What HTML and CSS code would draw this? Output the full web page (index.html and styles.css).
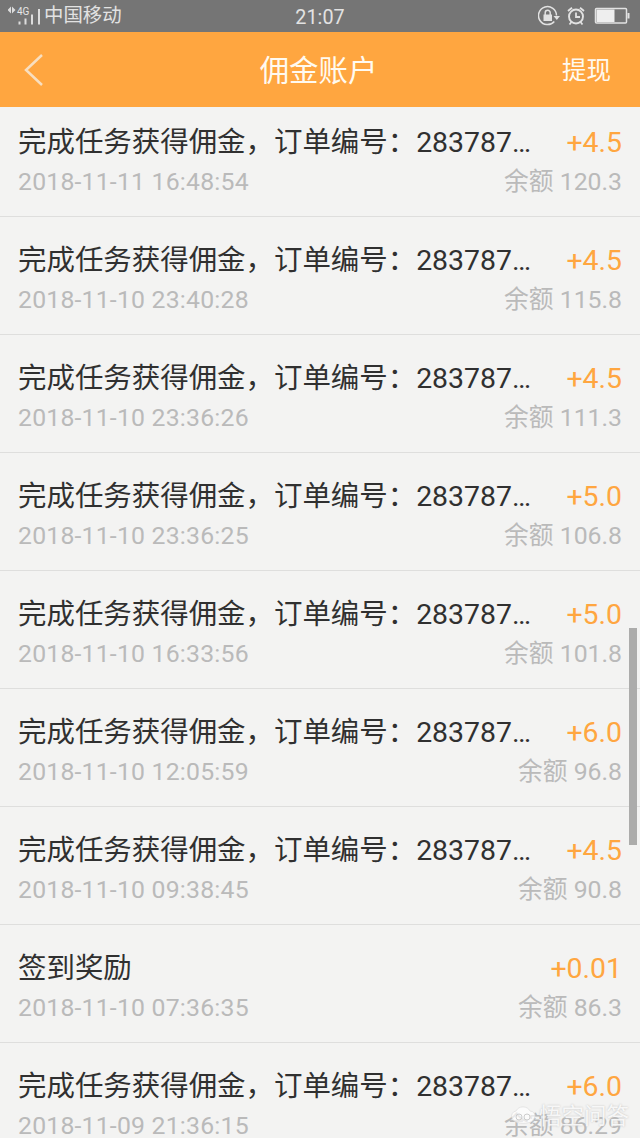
FILE: index.html
```html
<!DOCTYPE html>
<html lang="zh-CN">
<head>
<meta charset="utf-8">
<title>佣金账户</title>
<link rel="stylesheet" href="styles.css">
</head>
<body>
<div id="statusBar">
  <div class="carrier">
    <svg width="34" height="20" viewBox="0 0 34 20">
      <path d="M-.500 4L3 .500v7zM7.500 4L4 .500v7z" fill="#ddd"/>
      <text x="9" y="9" class="network">4G</text>
      <path d="M11.500 15.500v3M17.500 12.500v6M24 8.500v10M31 3v15.500" stroke="#ddd" stroke-width="2"/>
    </svg>
    <span>中国移动</span>
  </div>
  <div class="clock">21:07</div>
  <svg class="statusIcons" width="94" height="24" viewBox="0 0 94 24" fill="none" stroke="#e2e2e2">
    <path d="M16.300 17.500A9 9 0 1 1 18.500 11.500" stroke-width="1.500"/>
    <path d="M15.500 12h6.500l-3.200 4z" fill="#e2e2e2" stroke="none"/>
    <rect x="5.500" y="10.500" width="8.500" height="6.500" fill="#e2e2e2" stroke="none"/>
    <path d="M7.200 11V8.800a2.500 2.500 0 0 1 5 0V11" stroke-width="1.500"/>
    <circle cx="38" cy="12.500" r="7" stroke-width="1.900"/>
    <path d="M38 8.500v4.500h4M30 7l4-3.300M46 7l-4-3.300M33.500 18l-2 2.500M42.500 18l2 2.500" stroke-width="1.800"/>
    <rect x="57.500" y="4.500" width="31" height="14.500" rx="1" stroke-width="1.500"/>
    <path d="M58.500 5.500h18V18h-18z" fill="#eee" stroke="none"/>
    <path d="M90.500 9v5.500" stroke-width="2"/>
  </svg>
</div>
<div id="header">
  <svg class="back" width="20" height="32" viewBox="0 0 20 32">
    <path d="M18 1L2 16l16 15" fill="none" stroke="#f8dfc0" stroke-width="2.500"/>
  </svg>
  <div class="title">佣金账户</div>
  <div class="withdraw">提现</div>
</div>
<div id="records">
  <div class="record">
    <div class="line"><span class="desc">完成任务获得佣金，订单编号：283787…</span><span class="amount">+4.5</span></div>
    <div class="line small"><span class="time">2018-11-11 16:48:54</span><span>余额 120.3</span></div>
  </div>
  <div class="record">
    <div class="line"><span class="desc">完成任务获得佣金，订单编号：283787…</span><span class="amount">+4.5</span></div>
    <div class="line small"><span class="time">2018-11-10 23:40:28</span><span>余额 115.8</span></div>
  </div>
  <div class="record">
    <div class="line"><span class="desc">完成任务获得佣金，订单编号：283787…</span><span class="amount">+4.5</span></div>
    <div class="line small"><span class="time">2018-11-10 23:36:26</span><span>余额 111.3</span></div>
  </div>
  <div class="record">
    <div class="line"><span class="desc">完成任务获得佣金，订单编号：283787…</span><span class="amount">+5.0</span></div>
    <div class="line small"><span class="time">2018-11-10 23:36:25</span><span>余额 106.8</span></div>
  </div>
  <div class="record">
    <div class="line"><span class="desc">完成任务获得佣金，订单编号：283787…</span><span class="amount">+5.0</span></div>
    <div class="line small"><span class="time">2018-11-10 16:33:56</span><span>余额 101.8</span></div>
  </div>
  <div class="record">
    <div class="line"><span class="desc">完成任务获得佣金，订单编号：283787…</span><span class="amount">+6.0</span></div>
    <div class="line small"><span class="time">2018-11-10 12:05:59</span><span>余额 96.8</span></div>
  </div>
  <div class="record">
    <div class="line"><span class="desc">完成任务获得佣金，订单编号：283787…</span><span class="amount">+4.5</span></div>
    <div class="line small"><span class="time">2018-11-10 09:38:45</span><span>余额 90.8</span></div>
  </div>
  <div class="record">
    <div class="line"><span class="desc">签到奖励</span><span class="amount">+0.01</span></div>
    <div class="line small"><span class="time">2018-11-10 07:36:35</span><span>余额 86.3</span></div>
  </div>
  <div class="record">
    <div class="line"><span class="desc">完成任务获得佣金，订单编号：283787…</span><span class="amount">+6.0</span></div>
    <div class="line small"><span class="time">2018-11-09 21:36:15</span><span>余额 86.29</span></div>
  </div>
</div>
<div id="scrollbar"></div>
<div id="watermark">
  <svg width="28" height="22" viewBox="0 0 28 22">
    <path d="M3 13a5 5 0 0 1 4-7 8 8 0 0 1 14 0 5 5 0 0 1 4 8c-2 6-20 6-22-1z" fill="#fff" fill-opacity=".65" stroke="#ddd" stroke-width=".7"/>
    <circle cx="10" cy="12" r="3" fill="none" stroke="#ccc"/>
    <circle cx="18" cy="12" r="3" fill="none" stroke="#ccc"/>
  </svg>
  <span>悟空问答</span>
</div>
</body>
</html>
```

FILE: styles.css
```css
body {
  margin: 0;
  height: 1138px;
  overflow: hidden;
  position: relative;
  background-color: #f3f3f2;
  font-family: Roboto, "Noto Sans CJK SC", sans-serif;
}

#statusBar {
  display: grid;
  grid-template-columns: 1fr auto 1fr;
  align-items: center;
  height: 32px;
  padding: 0 8px;
  background-color: #757575;
  color: #e2e2e2;
  font-size: 19.4px;
}

.carrier {
  display: flex;
  align-items: center;
  height: 32px;
  line-height: 34px;
}

.carrier span {
  margin-left: 2px;
}

.network {
  font-size: 10px;
  fill: #e6e6e6;
}

.clock {
  font-size: 19.8px;
  padding-top: 2px;
}

.statusIcons {
  justify-self: end;
}

#header {
  display: grid;
  grid-template-columns: 1fr auto 1fr;
  align-items: center;
  height: 75px;
  padding: 0 29px 0 24px;
  background-color: #ffa640;
  color: #fffaf0;
}

.title {
  margin: 0 0 4px 2px;
  font-size: 29.4px;
}

.withdraw {
  justify-self: end;
  margin-bottom: 2px;
  font-size: 24.5px;
}

.record {
  box-sizing: border-box;
  height: 118px;
  padding: 24px 18px 0;
  border-bottom: 1px solid #dededd;
}

.record:first-child {
  height: 110px;
  padding-top: 16px;
}

.line {
  display: flex;
  justify-content: space-between;
  height: 40px;
  line-height: 40px;
  font-size: 28.45px;
  white-space: nowrap;
}

.desc {
  color: #303030;
}

.amount {
  color: #ffa640;
}

.small {
  line-height: 38px;
  font-size: 24.8px;
  color: #bababa;
}

.time {
  letter-spacing: 0.2px;
}

#scrollbar {
  position: absolute;
  top: 628px;
  right: 3px;
  width: 8px;
  height: 217px;
  background-color: #acacab;
}

#watermark {
  position: absolute;
  top: 1102px;
  left: 509px;
  display: flex;
  align-items: center;
  font-size: 22.5px;
  line-height: 28px;
  color: rgba(255, 255, 255, 0.85);
  text-shadow: 0 0 2px #bbb;
}

#watermark span {
  margin-left: 2px;
}
```
